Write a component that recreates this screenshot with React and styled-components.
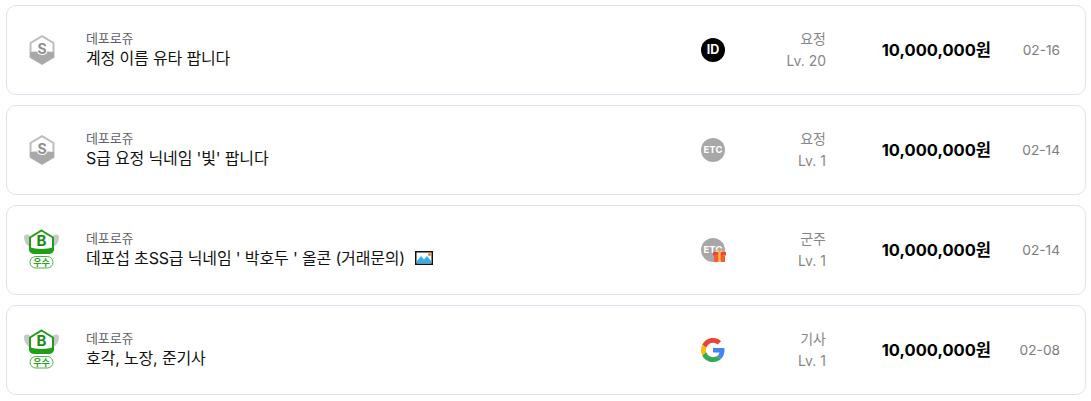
import React from "react";
import styled, { createGlobalStyle } from "styled-components";

const Global = createGlobalStyle`
  html, body { margin: 0; padding: 0; background: #fff; }
  body { font-family: Inter, "Noto Sans CJK KR", sans-serif; }
`;
const List = styled.div`
  display: flex; flex-direction: column; gap: 10px;
  padding: 5px 5px 0 6px; width: 1080px;
`;
const Card = styled.div`
  box-sizing: border-box; height: 90px;
  display: flex; align-items: center;
  border: 1px solid #dde2ee; border-radius: 10px;
  padding-left: 15px; background: #fff;
`;
const Grade = styled.div`
  width: 39px; height: 56px; flex: none; margin-right: 25px;
  display: flex; align-items: center; justify-content: center;
`;
const Info = styled.div`
  flex: 1; min-width: 0; display: flex; flex-direction: column; margin-top: -3px;
`;
const Seller = styled.div`
  font-size: 13px; line-height: 18px; color: #5f6066; margin-bottom: 1px; letter-spacing: -0.1px;
`;
const Title = styled.div`
  font-size: 16px; line-height: 20px; color: #111;
  letter-spacing: -0.15px;
  display: flex; align-items: center; white-space: pre;
`;
const Pic = styled.svg`
  width: 18px; height: 14px; margin-left: 10px; flex: none;
`;
const Platform = styled.div`
  width: 24px; height: 24px; flex: none; position: relative; margin-right: 25px;
`;
const Badge = styled.div`
  width: 24px; height: 24px; border-radius: 50%;
  background: ${p => p.$bg};
  color: #fff; font-weight: 700; font-size: ${p => p.$size}px; line-height: 24px;
  text-align: center;
`;
const Gift = styled.svg`
  position: absolute; right: -1px; bottom: 0; width: 13px; height: 13px;
`;
const Rank = styled.div`
  width: 76px; flex: none; text-align: right; color: #878787;
  font-size: 14px; line-height: 22px; margin-top: -1px;
`;
const Price = styled.div`
  width: 165px; flex: none; text-align: right; color: #000;
  font-size: 16.5px; line-height: 20px; font-weight: 700;
`;
const DateText = styled.div`
  width: 69px; padding-right: 25px; flex: none; text-align: right; color: #7d7d7d;
  font-size: 13.7px;
`;
const BadgeText = styled.text`
  font-family: Inter, "Noto Sans CJK KR", sans-serif;
  font-weight: 700; text-anchor: middle;
`;

const SBadge = () => (
  <svg width="26" height="30" viewBox="0 0 26 30">
    <path d="M13 1.200 24.500 8v14L13 28.800 1.500 22V8z" fill="#fff" stroke="#bdbdbd" strokeWidth="2" />
    <path d="M1 17c4-1 7-.500 12-.500s8-.500 12 .500v5.500L13 29.500 1 22.500z" fill="#a9a9a9" />
    <BadgeText x="13" y="18.500" fontSize="14" fill="#8f8f8f" stroke="#fff" strokeWidth="2" paintOrder="stroke">S</BadgeText>
  </svg>
);

const BBadge = () => (
  <svg width="39" height="44" viewBox="0 0 39 44">
    <path d="M7.500 7C4 5.500 1.500 7 2 10c.300 3 2 7 5.500 9z" fill="#c8c8c8" />
    <path d="M31.500 7c3.500-1.500 6 0 5.500 3-.300 3-2 7-5.500 9z" fill="#c8c8c8" />
    <path d="M19.500 2.500 31 9.500V21c-6 2.500-17 2.500-23 0V9.500z" fill="#fff" stroke="#1f9f18" strokeWidth="2" />
    <path d="M7 19c7 2.500 18 2.500 25 0v3.500c-1 2.500-3 3.500-5 3.500H12c-2 0-4-1-5-3.500z" fill="#1f9f18" />
    <BadgeText x="19.500" y="18" fontSize="15" fill="#1a8c14">B</BadgeText>
    <rect x="8" y="28.500" width="23" height="11.500" rx="5.750" fill="#fff" stroke="#4cb445" />
    <BadgeText x="19.500" y="37.500" fontSize="9" fill="#2aa323">우수</BadgeText>
  </svg>
);

const Google = () => (
  <svg width="24" height="24" viewBox="0 0 48 48">
    <path fill="#EA4335" d="M24 9.500c3.540 0 6.710 1.220 9.210 3.600l6.850-6.850C35.900 2.380 30.470 0 24 0 14.620 0 6.510 5.380 2.560 13.220l7.980 6.190C12.430 13.720 17.740 9.500 24 9.500z" />
    <path fill="#4285F4" d="M46.980 24.550c0-1.570-.15-3.090-.38-4.550H24v9.020h12.940c-.58 2.960-2.260 5.480-4.780 7.180l7.730 6c4.510-4.180 7.090-10.360 7.090-17.650z" />
    <path fill="#FBBC05" d="M10.530 28.590c-.48-1.450-.76-2.990-.76-4.590s.27-3.140.76-4.590l-7.980-6.190C.92 16.460 0 20.120 0 24c0 3.880.92 7.540 2.560 10.780l7.970-6.190z" />
    <path fill="#34A853" d="M24 48c6.480 0 11.930-2.130 15.890-5.810l-7.730-6c-2.150 1.450-4.920 2.300-8.160 2.300-6.260 0-11.570-4.220-13.470-9.910l-7.980 6.190C6.510 42.620 14.620 48 24 48z" />
  </svg>
);

const items = [
  { g: "s", t: "계정 이름 유타 팝니다", p: "id", c: "요정", lv: "Lv. 20", d: "02-16" },
  { g: "s", t: "S급 요정 닉네임 '빛' 팝니다", p: "etc", c: "요정", lv: "Lv. 1", d: "02-14" },
  { g: "b", t: "데포섭 초SS급 닉네임 ' 박호두 ' 올콘 (거래문의)", img: true, p: "gift", c: "군주", lv: "Lv. 1", d: "02-14" },
  { g: "b", t: "호각, 노장, 준기사", p: "google", c: "기사", lv: "Lv. 1", d: "02-08" },
];

const PlatformIcon = ({ kind }) => {
  if (kind === "google") return <Platform><Google /></Platform>;
  if (kind === "id") return <Platform><Badge $bg="#000" $size={12.5}>ID</Badge></Platform>;
  return (
    <Platform>
      <Badge $bg="#a8a8a8" $size={9.5}>ETC</Badge>
      {kind === "gift" && (
        <Gift viewBox="0 0 13 13">
          <path d="M0 3h13v3.500H0z" fill="#f4433c" />
          <path d="M1 6.500h11V13H1z" fill="#fb5a36" />
          <path d="M5.300 3h2.400v10H5.300z" fill="#ffc93a" />
          <path d="M6.500 3 3.500.8M6.500 3 9.500.8" stroke="#ffb52e" strokeWidth="1.400" fill="none" />
        </Gift>
      )}
    </Platform>
  );
};

export default function App() {
  return (
    <>
      <Global />
      <List>
        {items.map((it, i) => (
          <Card key={i}>
            <Grade>{it.g === "s" ? <SBadge /> : <BBadge />}</Grade>
            <Info>
              <Seller>데포로쥬</Seller>
              <Title>
                {it.t}
                {it.img && (
                  <Pic viewBox="0 0 18 14">
                    <rect x=".75" y=".75" width="16.500" height="12.500" fill="#fff" stroke="#111" strokeWidth="1.500" />
                    <path d="M2 12V10l4-5 3 3.500L12 5l4 5v2z" fill="#2fb2ea" />
                    <circle cx="14.500" cy="3.500" r="1.500" fill="#f5793a" />
                  </Pic>
                )}
              </Title>
            </Info>
            <PlatformIcon kind={it.p} />
            <Rank>
              <div>{it.c}</div>
              <div>{it.lv}</div>
            </Rank>
            <Price>10,000,000원</Price>
            <DateText>{it.d}</DateText>
          </Card>
        ))}
      </List>
    </>
  );
}
